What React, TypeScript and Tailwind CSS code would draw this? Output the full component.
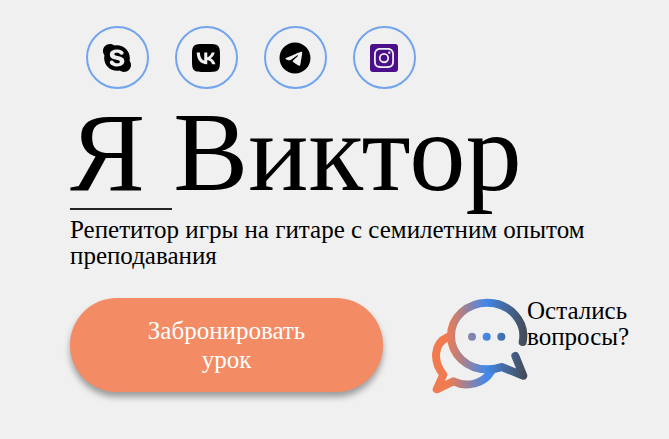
import { FaInstagramSquare, FaSkype } from "react-icons/fa";
import { FaTelegram, FaVk } from "react-icons/fa6";

const socials = [
  { name: "Skype", Icon: FaSkype, color: "text-black" },
  { name: "VK", Icon: FaVk, color: "text-black" },
  { name: "Telegram", Icon: FaTelegram, color: "text-black" },
  { name: "Instagram", Icon: FaInstagramSquare, color: "text-[#4b0f8c]" },
];

function ChatIcon() {
  return (
    <svg viewBox="36 36 288 288" className="h-24 w-24 shrink-0" fill="none" strokeWidth="24" strokeLinecap="round" strokeLinejoin="round">
      <defs>
        <linearGradient id="front" gradientUnits="userSpaceOnUse" x1="80" y1="0" x2="315" y2="0">
          <stop offset="0" stopColor="#f07b50" />
          <stop offset="0.5" stopColor="#4388e8" />
          <stop offset="1" stopColor="#444c58" />
        </linearGradient>
        <linearGradient id="back" gradientUnits="userSpaceOnUse" x1="85" y1="0" x2="200" y2="0">
          <stop offset="0" stopColor="#f07b50" />
          <stop offset="1" stopColor="#4388e8" />
        </linearGradient>
      </defs>
      <path stroke="url(#back)" d="M84 153C40 172 38 226 70 266L50 310L100 286C142 306 191 293 213 257" />
      <path stroke="url(#front)" d="M308 168A108 100 0 0 0 201 50A108 100 0 0 0 93 150A108 100 0 0 0 201 250A108 100 0 0 0 245 243L310 269L286 210" />
      <g fill="url(#front)">
        <circle cx="156" cy="152" r="12" />
        <circle cx="200" cy="152" r="12" />
        <circle cx="244" cy="152" r="12" />
      </g>
    </svg>
  );
}

export default function App() {
  return (
    <main className="h-[439px] w-[669px] overflow-hidden bg-[#f0f0f0] pt-[26px] pl-[70px] font-['Liberation_Serif',serif] text-[25px] leading-[26px] text-black">
      <nav className="flex gap-[26px] pl-[15.5px]">
        {socials.map(({ name, Icon, color }) => (
          <a key={name} aria-label={name} className={"flex size-[63px] items-center justify-center rounded-full border-2 border-[#73a4ee] " + color}>
            <Icon size={32} />
          </a>
        ))}
      </nav>
      <h1 className="mt-px h-[118px] text-[112.5px] leading-[125px] whitespace-nowrap">Я Виктор</h1>
      <div className="h-[2px] w-[102px] bg-[#252525]" />
      <p className="mt-[7px] whitespace-nowrap">
        Репетитор игры на гитаре с семилетним опытом
        <br />
        преподавания
      </p>
      <div className="mt-[29px] flex items-start">
        <button className="h-[94px] w-[313px] rounded-full bg-[#f38b64] text-center leading-[29px] text-white shadow-[0_5px_6px_rgba(0,0,0,0.35)]">
          Забронировать
          <br />
          урок
        </button>
        <div className="ml-[49px] flex items-start">
          <ChatIcon />
          <p className="-ml-px whitespace-nowrap">
            Остались
            <br />
            вопросы?
          </p>
        </div>
      </div>
    </main>
  );
}
